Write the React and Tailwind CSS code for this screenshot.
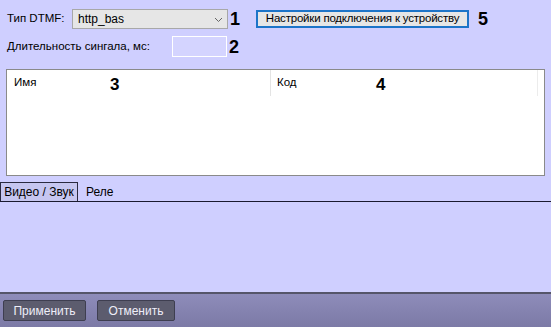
export default function App() {
  return (
    <div
      className="w-[551px] h-[327px] bg-[#cfcfff] flex flex-col overflow-hidden text-[11.5px] text-black"
      style={{ fontFamily: '"Liberation Sans", Arial, sans-serif' }}
    >
      {/* Row 1 */}
      <div className="flex items-center h-[20px] mt-[9px] pl-[7px]">
        <span className="w-[65px]">Тип DTMF:</span>
        <div className="w-[156px] h-[20px] bg-[#e6e6e6] border border-[#a8a8a8] flex items-center justify-between pl-[5px] pr-[4px]">
          <span className="text-[12px]">http_bas</span>
          <svg width="9" height="6" viewBox="0 0 9 6" className="mt-[1px]">
            <path d="M1 1 L4.5 4.5 L8 1" fill="none" stroke="#666" strokeWidth="1" />
          </svg>
        </div>
        <span className="ml-[2px] text-[18px] font-bold leading-none w-[12px]">1</span>
        <div className="ml-[14px] w-[213px] h-[18px] bg-[#e6e6e6] border-2 border-[#1c74c8] flex items-center justify-center tracking-[-0.2px]">
          Настройки подключения к устройству
        </div>
        <span className="ml-[9px] text-[18px] font-bold leading-none">5</span>
      </div>
      {/* Row 2 */}
      <div className="flex items-center h-[21px] mt-[7px] pl-[7px]">
        <span className="w-[165px]">Длительность сингала, мс:</span>
        <div className="w-[55px] h-[21px] border border-white bg-[#d4d4ff]" />
        <span className="ml-[2px] text-[18px] font-bold leading-none">2</span>
      </div>
      {/* List */}
      <div className="mt-[12px] ml-[6px] w-[539px] h-[107px] bg-white border border-[#8a8a8a] flex flex-col">
        <div className="flex h-[26px] items-center">
          <div className="w-[264px] h-full border-r border-[#e4e4e4] flex items-center pl-[7px] relative">
            <span>Имя</span>
            <span className="absolute left-[103px] top-[2px] text-[17px] font-bold">3</span>
          </div>
          <div className="flex-1 h-full border-r border-[#ececec] mr-[6px] flex items-center pl-[6px] relative">
            <span>Код</span>
            <span className="absolute left-[105px] top-[2px] text-[17px] font-bold">4</span>
          </div>
        </div>
      </div>
      {/* Tabs */}
      <div className="mt-[6px] flex h-[20px] border-b border-[#1a1a30]">
        <div className="w-[78px] h-full bg-[#c6c6f0] border border-b-0 border-[#2a2a40] flex items-center justify-center text-[12px]">
          Видео / Звук
        </div>
        <div className="ml-[8px] flex items-center text-[12px]">Реле</div>
      </div>
      <div className="flex-1" />
      {/* Bottom bar */}
      <div className="h-[35px] border-t-2 border-[#55556a] bg-gradient-to-b from-[#8e8cba] to-[#7c7aa6] flex items-center pl-[3px] gap-[11px]">
        <div className="w-[83px] h-[21px] bg-[#5c5c6e] border border-[#3e3e50] rounded-[2px] text-[#eeeef8] flex items-center justify-center text-[12px]">
          Применить
        </div>
        <div className="w-[78px] h-[21px] bg-[#5c5c6e] border border-[#3e3e50] rounded-[2px] text-[#eeeef8] flex items-center justify-center text-[12px]">
          Отменить
        </div>
      </div>
    </div>
  );
}
